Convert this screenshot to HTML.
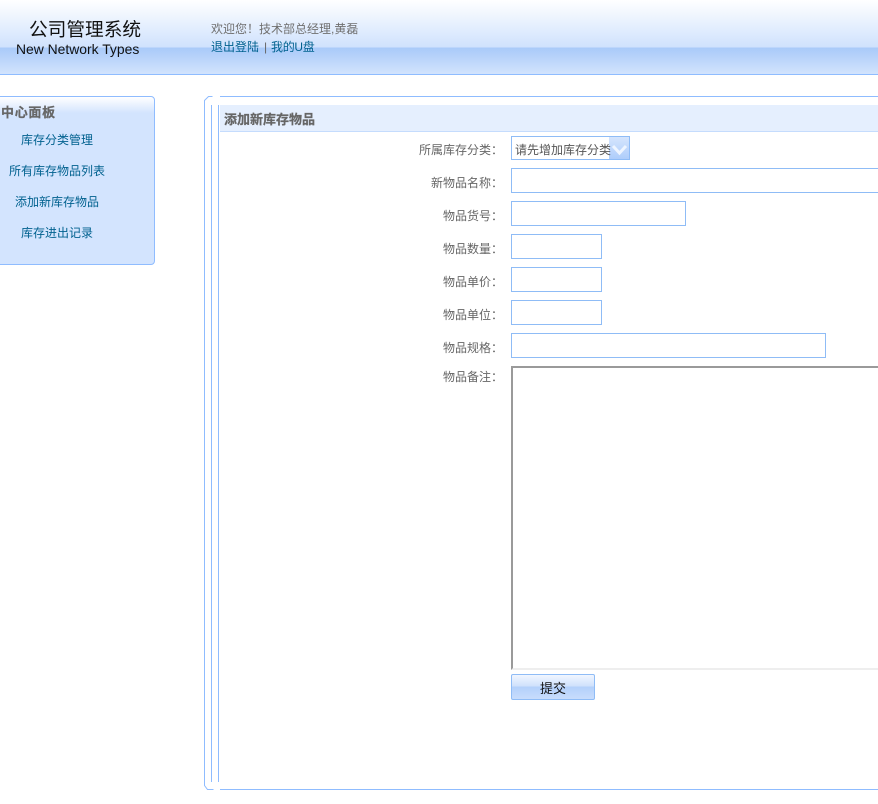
<!DOCTYPE html>
<html lang="zh">
<head>
<meta charset="utf-8">
<title>公司管理系统</title>
<style>
html,body{margin:0;padding:0;background:#fff;}
body{position:relative;width:878px;height:804px;overflow:hidden;font-family:"WenQuanYi Zen Hei","Liberation Sans","Noto Sans CJK SC",sans-serif;font-size:12px;color:#666;}
.a{position:absolute;box-sizing:border-box;}
.t{position:absolute;white-space:nowrap;line-height:16px;}
.r{text-align:right;width:100px;left:403px;}
.l{color:#00618f;}
.c{text-align:center;width:154px;left:-20px;color:#00618f;}
.i{position:absolute;box-sizing:border-box;border:1px solid #8fbcf6;background:#fff;}
.v{position:absolute;width:1px;background:#8fbcff;}
.b{font-weight:bold;font-family:"WenQuanYi Zen Hei","Noto Sans CJK SC",sans-serif;font-size:13px;color:#666;-webkit-text-stroke:.25px #666;}
</style>
</head>
<body>
<div class="a" style="left:0;top:0;width:878px;height:75px;border-bottom:1px solid #8fbcff;background:linear-gradient(to bottom,#fff 0,#d0e2fd 47px,#a9caf9 48px,#d2e3fd 74px);"></div>
<div class="t" style="left:29px;top:17px;font-size:18.7px;line-height:24px;color:#111;font-family:'Noto Sans CJK SC',sans-serif;font-weight:400;">公司管理系统</div>
<div class="t" style="left:16px;top:41px;font-family:'Liberation Sans',sans-serif;font-size:13.9px;color:#111;">New Network Types</div>
<div class="t" style="left:211px;top:21px;color:#707070;">欢迎您！技术部总经理,黄磊</div>
<div class="t l" style="left:211px;top:39px;">退出登陆</div>
<div class="t" style="left:264px;top:39px;">|</div>
<div class="t l" style="left:271px;top:39px;letter-spacing:-.3px;">我的U盘</div>

<div class="a" style="left:-6px;top:96px;width:161px;height:169px;border:1px solid #8fbcff;border-radius:4px;background:linear-gradient(to bottom,#fff 0,#d3e4fe 16px,#d3e4fe 100%);"></div>
<div class="t b" style="left:1px;top:104px;letter-spacing:.7px;">中心面板</div>
<div class="t c" style="top:132px;">库存分类管理</div>
<div class="t c" style="top:163px;">所有库存物品列表</div>
<div class="t c" style="top:194px;">添加新库存物品</div>
<div class="t c" style="top:225px;">库存进出记录</div>

<svg class="a" style="left:200px;top:92px;" width="678" height="702" fill="none" stroke="#8fbcff" stroke-width="1">
  <path d="M12.5 4.5H8.5L4.5 8.5V693.5L7.5 697.5H13.5"/>
  <path d="M20 4.5H678"/>
  <path d="M20 697.5H678"/>
</svg>
<div class="v" style="left:211px;top:105px;height:677px;"></div>
<div class="v" style="left:218px;top:105px;height:677px;"></div>

<div class="a" style="left:220px;top:105px;width:658px;height:27px;background:#e5effe;border-bottom:1px solid #c5dcfd;"></div>
<div class="t b" style="left:224px;top:111px;">添加新库存物品</div>

<div class="t r" style="top:142px;">所属库存分类：</div>
<div class="t r" style="top:175px;">新物品名称：</div>
<div class="t r" style="top:208px;">物品货号：</div>
<div class="t r" style="top:241px;">物品数量：</div>
<div class="t r" style="top:274px;">物品单价：</div>
<div class="t r" style="top:307px;">物品单位：</div>
<div class="t r" style="top:340px;">物品规格：</div>
<div class="t r" style="top:369px;">物品备注：</div>

<div class="i" style="left:511px;top:136px;width:119px;height:24px;"></div>
<div class="a" style="left:609px;top:137px;width:20px;height:22px;background:linear-gradient(to bottom,#d5e5fd,#aecdfb);"></div>
<svg class="a" style="left:611px;top:143px;" width="18" height="14" fill="none"><path d="M2 3L8.5 10L15 3" stroke="#eef5ff" stroke-width="3"/></svg>
<div class="t" style="left:515px;top:142px;color:#555;">请先增加库存分类</div>

<div class="i" style="left:511px;top:168px;width:380px;height:25px;"></div>
<div class="i" style="left:511px;top:201px;width:175px;height:25px;"></div>
<div class="i" style="left:511px;top:234px;width:91px;height:25px;"></div>
<div class="i" style="left:511px;top:267px;width:91px;height:25px;"></div>
<div class="i" style="left:511px;top:300px;width:91px;height:25px;"></div>
<div class="i" style="left:511px;top:333px;width:315px;height:25px;"></div>

<div class="a" style="left:511px;top:366px;width:380px;height:304px;border:2px solid;border-color:#9a9a9a #eee #eee #9a9a9a;background:#fff;"></div>

<div class="a" style="left:511px;top:674px;width:84px;height:26px;border:1px solid #8fbcf6;border-radius:2px;background:linear-gradient(to bottom,#f1f6ff 0,#cfe1fc 46%,#b3d0fb 50%,#c8dcfc 100%);color:#111;text-align:center;line-height:27px;font-size:13px;">提交</div>
</body>
</html>
